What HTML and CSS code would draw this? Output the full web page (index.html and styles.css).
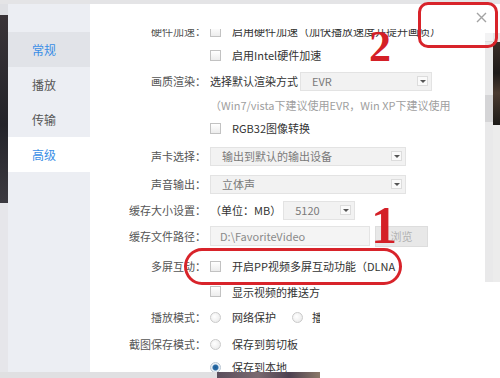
FILE: index.html
```html
<!DOCTYPE html>
<html lang="zh-CN">
<head>
    <meta charset="UTF-8">
    <title>设置 - 高级</title>
    <link rel="stylesheet" href="styles.css">
</head>
<body>
    <div class="screen">
        <div class="top-strip"></div>

        <div class="middle">
            <div class="desk-edge"></div>

            <nav class="sidebar">
                <div class="nav-item hover">常规</div>
                <div class="nav-item">播放</div>
                <div class="nav-item">传输</div>
                <div class="nav-item active">高级</div>
            </nav>

            <div class="panel">
                <div class="panel-head">
                    <button class="close" type="button" aria-label="关闭">
                        <svg width="11" height="11" viewBox="0 0 11 11"><path d="M1 1 L10 10 M10 1 L1 10" stroke="#a3a3a3" stroke-width="1.4" fill="none"/></svg>
                    </button>
                </div>

                <div class="panel-body">
                    <div class="viewport">
                        <div class="rows">
                            <div class="row">
                                <div class="label">硬件加速：</div>
                                <div class="field"><span class="check"></span>启用硬件加速（加快播放速度并提升画质）</div>
                            </div>
                            <div class="row">
                                <div class="label"></div>
                                <div class="field"><span class="check"></span>启用Intel硬件加速</div>
                            </div>
                            <div class="row row-md">
                                <div class="label">画质渲染：</div>
                                <div class="field">选择默认渲染方式
                                    <div class="select select-evr">EVR<span class="arrow"></span></div>
                                </div>
                            </div>
                            <div class="row row-sm">
                                <div class="label"></div>
                                <div class="field note">（Win7/vista下建议使用EVR，Win XP下建议使用</div>
                            </div>
                            <div class="row row-md">
                                <div class="label"></div>
                                <div class="field"><span class="check"></span>RGB32图像转换</div>
                            </div>
                            <div class="row row-md">
                                <div class="label">声卡选择：</div>
                                <div class="field">
                                    <div class="select select-wide">输出到默认的输出设备<span class="arrow"></span></div>
                                </div>
                            </div>
                            <div class="row row-md">
                                <div class="label">声音输出：</div>
                                <div class="field">
                                    <div class="select select-wide">立体声<span class="arrow"></span></div>
                                </div>
                            </div>
                            <div class="row">
                                <div class="label">缓存大小设置：</div>
                                <div class="field">（单位：MB）
                                    <div class="select select-size">5120<span class="arrow"></span></div>
                                </div>
                            </div>
                            <div class="row row-md">
                                <div class="label">缓存文件路径：</div>
                                <div class="field">
                                    <div class="input">D:\FavoriteVideo</div>
                                    <button class="browse" type="button">浏览</button>
                                </div>
                            </div>
                            <div class="row row-lg">
                                <div class="label">多屏互动：</div>
                                <div class="field"><span class="check"></span>开启PP视频多屏互动功能（DLNA</div>
                            </div>
                            <div class="row row-sm">
                                <div class="label"></div>
                                <div class="field"><span class="check"></span>显示视频的推送方式</div>
                            </div>
                            <div class="row row-lg">
                                <div class="label">播放模式：</div>
                                <div class="field"><span class="radio"></span>网络保护<span class="radio radio-gap"></span>播放优先</div>
                            </div>
                            <div class="row row-tight">
                                <div class="label">截图保存模式：</div>
                                <div class="field"><span class="radio"></span>保存到剪切板</div>
                            </div>
                            <div class="row">
                                <div class="label"></div>
                                <div class="field"><span class="radio checked"></span>保存到本地</div>
                            </div>
                        </div>
                    </div>

                    <div class="side-right">
                        <div class="scrollbar">
                            <div class="scroll-cap"></div>
                            <div class="scroll-thumb"></div>
                        </div>
                        <div class="desk-photo"></div>
                    </div>
                </div>
            </div>
        </div>

        <div class="bottom-strip">
            <div class="bottom-gray"></div>
            <div class="bottom-photo"></div>
        </div>

        <!-- white patch pasted over the lower right -->
        <div class="cover"></div>

        <!-- red annotations -->
        <div class="mark-box"></div>
        <div class="mark-num mark-two">2</div>
        <div class="mark-num mark-one">1</div>
        <div class="mark-ring"></div>
    </div>
</body>
</html>
```

FILE: styles.css
```css
* {
    box-sizing: border-box;
}

html,
body {
    margin: 0;
    padding: 0;
}

body {
    font-family: "Noto Sans CJK SC", "Noto Sans", sans-serif;
    font-size: 11px;
    color: #333;
    background-color: #fff;
}

.screen {
    position: relative;
    width: 500px;
    height: 378px;
    overflow: hidden;
    display: flex;
    flex-direction: column;
}

.top-strip {
    height: 4px;
    background-color: #e4e4e6;
}

.middle {
    display: flex;
    height: 368px;
}

.desk-edge {
    width: 8px;
    background: linear-gradient(to bottom, #dfe0e4 0, #dfe0e4 11px, #3a3438 11px, #24242a 120px, #3c3a40 199px, #e6e6ea 199px);
}

.sidebar {
    width: 82px;
    padding-top: 28px;
    background-color: #eceef3;
}

.nav-item {
    height: 35px;
    line-height: 35px;
    padding-left: 24px;
    font-size: 12px;
    color: #555;
}

.nav-item.hover {
    background-color: #e1e3e8;
    color: #3a8ee6;
}

.nav-item.active {
    background-color: #fff;
    color: #3a8ee6;
}

.panel {
    width: 410px;
    display: flex;
    flex-direction: column;
    background-color: #fff;
}

.panel-head {
    height: 25px;
    display: flex;
    justify-content: flex-end;
    padding-top: 8px;
    padding-right: 13px;
}

.close {
    width: 11px;
    height: 11px;
    padding: 0;
    border: none;
    background: transparent;
    line-height: 0;
}

.panel-body {
    flex: 1;
    display: flex;
    min-height: 0;
}

.viewport {
    width: 395px;
    overflow: hidden;
}

.rows {
    margin-top: -10px;
}

.row {
    display: flex;
    align-items: center;
    height: 24px;
}

.row-sm {
    height: 19px;
}

.row-tight {
    height: 22px;
}

.row-md {
    height: 28px;
}

.row-lg {
    height: 32px;
}

.label {
    width: 116px;
    flex-shrink: 0;
    text-align: right;
    color: #555;
}

.field {
    display: flex;
    align-items: center;
    padding-left: 4px;
    white-space: nowrap;
}

.note {
    color: #a0a0a0;
}

.check,
.radio {
    width: 11px;
    height: 11px;
    margin-right: 11px;
    flex-shrink: 0;
    border: 1px solid #c2c2c2;
    background: linear-gradient(#fff, #ececec);
}

.radio {
    border-radius: 50%;
    border-color: #cacaca;
    background: radial-gradient(circle at 40% 40%, #fff, #e6e6e6);
}

.radio-gap {
    margin-left: 16px;
    margin-right: 9px;
}

.radio.checked {
    border-color: #b9c6d2;
    background: radial-gradient(circle, #1d5b94 0, #2c6ea8 2.5px, #e8eef4 3.5px, #f4f6f8 100%);
}

.select {
    position: relative;
    display: flex;
    align-items: center;
    justify-content: space-between;
    height: 19px;
    padding-left: 11px;
    padding-right: 3px;
    background-color: #f2f2f2;
    border: 1px solid #e3e3e3;
    color: #7a7a7a;
}

.select-evr {
    width: 132px;
    margin-left: 2px;
}

.select-wide {
    width: 196px;
}

.select-size {
    width: 72px;
    height: 19px;
    margin-left: 2px;
}

.arrow {
    width: 11px;
    height: 10px;
    border: 1px solid #dcdcdc;
    background-color: #fafafa;
    position: relative;
}

.arrow::after {
    content: "";
    position: absolute;
    left: 2px;
    top: 3px;
    border-left: 3px solid transparent;
    border-right: 3px solid transparent;
    border-top: 3px solid #555;
}

.input {
    width: 160px;
    height: 20px;
    line-height: 18px;
    padding-left: 9px;
    background-color: #f4f4f4;
    border: 1px solid #e4e4e4;
    color: #8a8a8a;
}

.browse {
    width: 53px;
    height: 21px;
    margin-left: 5px;
    padding: 0;
    border: 1px solid #dddddd;
    background-color: #e8e8e8;
    color: #b2b2b2;
    font-family: inherit;
    font-size: 11px;
}

.side-right {
    width: 15px;
    display: flex;
    padding-top: 4px;
}

.scrollbar {
    width: 8px;
    background-color: #e9e9ea;
}

.scroll-cap {
    height: 9px;
    background-color: #f3f3f4;
    border-bottom: 1px solid #dedede;
}

.scroll-thumb {
    height: 27px;
    margin-top: 53px;
    background-color: #d5d5d7;
}

.desk-photo {
    width: 7px;
    background: linear-gradient(to bottom, #e6e6e6 0, #e6e6e6 9px, #3a2e28 9px, #1e1b1a 40px, #4a3a30 60px, #1c1a18 92px, #ececec 92px);
}

.bottom-strip {
    display: flex;
    height: 6px;
}

.bottom-gray {
    width: 217px;
    background-color: #e0e0e2;
}

.bottom-photo {
    width: 103px;
    background: linear-gradient(to right, #5a4e5c, #7a6a70 40%, #4c4050 70%, #8a7868);
}

.cover {
    position: absolute;
    left: 320px;
    top: 282px;
    right: 0;
    bottom: 0;
    background-color: #fff;
}

.mark-box {
    position: absolute;
    left: 418px;
    top: 2px;
    width: 80px;
    height: 46px;
    border: 3px solid #d8232a;
    border-radius: 10px;
}

.mark-ring {
    position: absolute;
    left: 184px;
    top: 248px;
    width: 218px;
    height: 37px;
    border: 3px solid #d8232a;
    border-radius: 18px / 50%;
}

.mark-num {
    position: absolute;
    font-family: "Liberation Serif", serif;
    font-weight: bold;
    line-height: 1;
    color: #d42027;
}

.mark-two {
    left: 369px;
    top: 25px;
    font-size: 44px;
}

.mark-one {
    left: 371px;
    top: 200px;
    font-size: 52px;
}
```
